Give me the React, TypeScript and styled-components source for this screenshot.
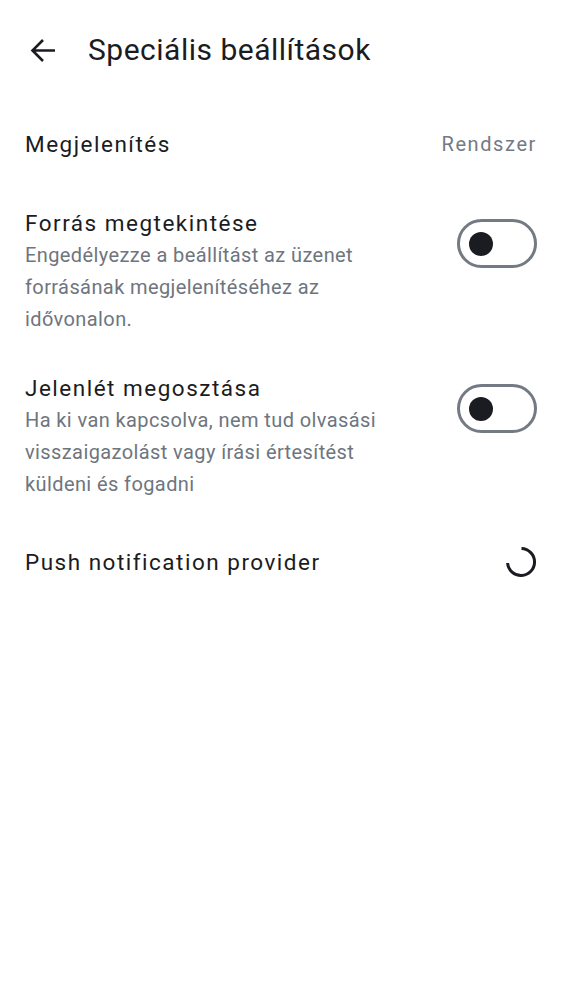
import React from "react";
import styled, { createGlobalStyle } from "styled-components";

const Global = createGlobalStyle`
  html, body { margin: 0; padding: 0; background: #ffffff; }
  body { font-family: Roboto, "Noto Sans", sans-serif; color: #1b1c21; }
`;

const Page = styled.div`
  width: 562px;
  min-height: 1000px;
  background: #ffffff;
  display: flex;
  flex-direction: column;
`;

const Header = styled.header`
  height: 100px;
  display: flex;
  align-items: center;
  padding: 0 0 0 28px;
  box-sizing: border-box;
  gap: 29px;
`;

const BackButton = styled.button`
  width: 31px;
  height: 31px;
  padding: 0;
  border: none;
  background: none;
  display: flex;
  align-items: center;
  justify-content: center;
  color: #1b1c21;
`;

const Title = styled.h1`
  margin: 0;
  font-size: 30px;
  font-weight: 400;
  line-height: 36px;
  letter-spacing: 0.5px;
  color: #1b1c21;
`;

const Row = styled.div<{ $pt: number; $pb: number }>`
  display: flex;
  align-items: flex-start;
  justify-content: space-between;
  padding: ${(p) => p.$pt}px 25px ${(p) => p.$pb}px 25px;
  gap: 24px;
`;

const CenterRow = styled(Row)`
  align-items: center;
`;

const TextCol = styled.div`
  display: flex;
  flex-direction: column;
  flex: 1;
  min-width: 0;
`;

const Label = styled.div`
  font-size: 22.5px;
  line-height: 32px;
  letter-spacing: 1.5px;
  color: #1b1c21;
`;

const Sub = styled.div`
  font-size: 20px;
  line-height: 32px;
  letter-spacing: 0.4px;
  color: #6e757e;
  max-width: 400px;
`;

const Value = styled.div`
  font-size: 20px;
  line-height: 32px;
  letter-spacing: 1.6px;
  color: #737a83;
`;

const Track = styled.div`
  width: 80px;
  height: 49px;
  box-sizing: border-box;
  border: 3px solid #747a83;
  border-radius: 25px;
  display: flex;
  align-items: center;
  padding-left: 9px;
  margin-top: 12px;
  flex-shrink: 0;
`;

const Knob = styled.div`
  width: 24px;
  height: 24px;
  border-radius: 50%;
  background: #1b1c21;
`;

const Spinner = styled.svg`
  width: 34px;
  height: 34px;
  flex-shrink: 0;
  margin-right: -1px;
`;

const Toggle = () => (
  <Track>
    <Knob />
  </Track>
);

export default function App() {
  return (
    <Page>
      <Global />
      <Header>
        <BackButton aria-label="Vissza">
          <svg width="31" height="31" viewBox="0 0 31 31" fill="none">
            <path
              d="M15 8.5 L4.5 19 L15 29.5 M4.5 19 H27"
              transform="translate(0,-3.5)"
              stroke="#1b1c21"
              strokeWidth="2.6"
              strokeLinecap="butt"
              strokeLinejoin="miter"
            />
          </svg>
        </BackButton>
        <Title>Speciális beállítások</Title>
      </Header>

      <CenterRow $pt={28} $pb={28}>
        <Label>Megjelenítés</Label>
        <Value>Rendszer</Value>
      </CenterRow>

      <Row $pt={19} $pb={18}>
        <TextCol>
          <Label>Forrás megtekintése</Label>
          <Sub>
            Engedélyezze a beállítást az üzenet forrásának megjelenítéséhez az
            idővonalon.
          </Sub>
        </TextCol>
        <Toggle />
      </Row>

      <Row $pt={19} $pb={18}>
        <TextCol>
          <Label>Jelenlét megosztása</Label>
          <Sub>
            Ha ki van kapcsolva, nem tud olvasási visszaigazolást vagy írási
            értesítést küldeni és fogadni
          </Sub>
        </TextCol>
        <Toggle />
      </Row>

      <CenterRow $pt={27} $pb={27}>
        <Label>Push notification provider</Label>
        <Spinner viewBox="0 0 34 34">
          <path
            d="M17.5 3.5 A13.5 13.5 0 1 1 3.6 18"
            fill="none"
            stroke="#1b1c21"
            strokeWidth="3"
          />
        </Spinner>
      </CenterRow>
    </Page>
  );
}
